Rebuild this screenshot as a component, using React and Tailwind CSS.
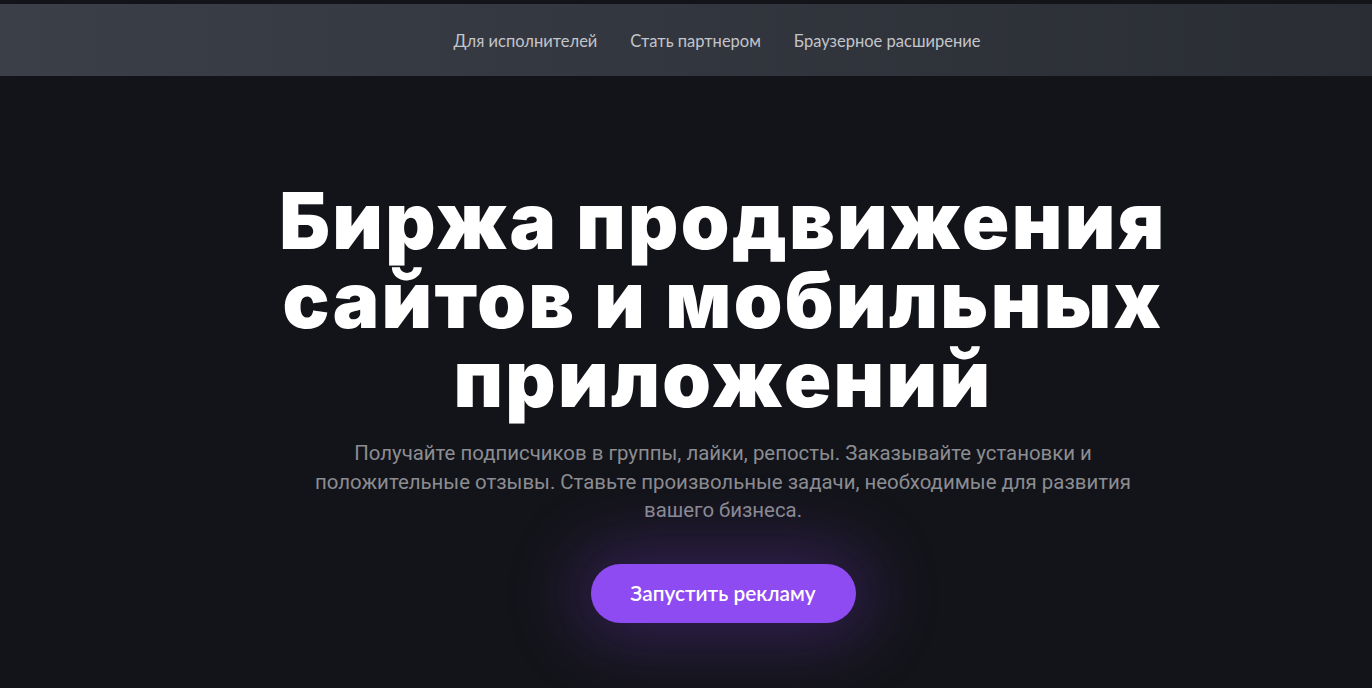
import React from 'react';

const navLinks = ['Для исполнителей', 'Стать партнером', 'Браузерное расширение'];

const App = () => {
  return (
    <div className="min-h-screen w-full bg-[#131419] pt-1">
      <header className="h-[72px] w-full bg-gradient-to-r from-[#3b3f48] to-[#2a2d34] flex items-center justify-center">
        <nav className="flex items-center gap-[33px] pl-[62px] pt-[2px] font-['Lato','Liberation_Sans',sans-serif] text-[16.5px] text-[#c3c5ca]">
          {navLinks.map((link) => (
            <a key={link} href="#" className="hover:text-white">
              {link}
            </a>
          ))}
        </nav>
      </header>

      <main className="flex flex-col items-center pt-[105px] pl-[74px]">
        <h1 className="text-center font-['Inter','Noto_Sans',sans-serif] font-black text-white text-[78px] leading-[79px] tracking-[0.03em]">
          Биржа продвижения
          <br />
          сайтов и мобильных
          <br />
          приложений
        </h1>

        <p className="mt-[21px] max-w-[840px] text-center font-['Roboto','Liberation_Sans',sans-serif] text-[20.4px] leading-[28.5px] text-[#8b8d92]">
          Получайте подписчиков в группы, лайки, репосты. Заказывайте установки и положительные
          отзывы. Ставьте произвольные задачи, необходимые для развития вашего бизнеса.
        </p>

        <button className="mt-[39px] h-[59px] w-[265px] rounded-full bg-[#8e4bf1] font-['Lato','Liberation_Sans',sans-serif] text-[20.8px] font-semibold text-white shadow-[0_0_70px_16px_rgba(126,64,220,0.3)]">
          Запустить рекламу
        </button>
      </main>
    </div>
  );
};

export default App;
